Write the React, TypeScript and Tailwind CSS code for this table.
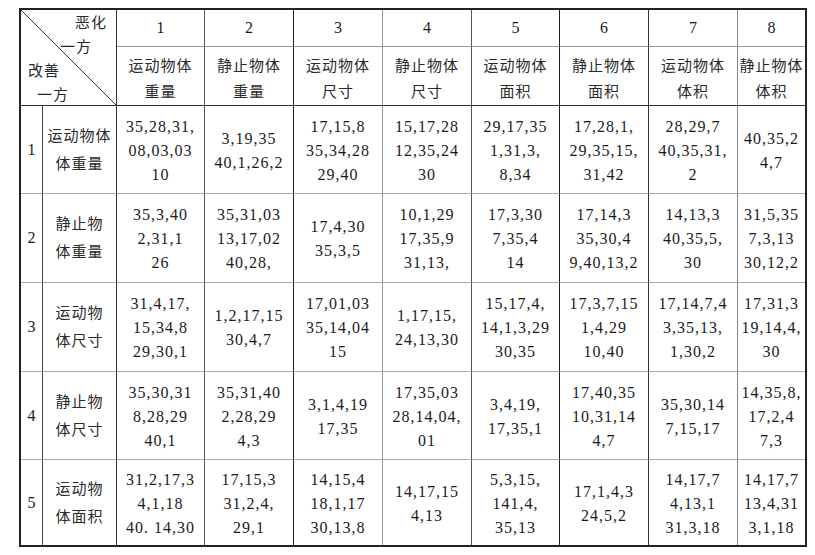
const cols = ["1", "2", "3", "4", "5", "6", "7", "8"];

const heads = [
  ["运动物体", "重量"],
  ["静止物体", "重量"],
  ["运动物体", "尺寸"],
  ["静止物体", "尺寸"],
  ["运动物体", "面积"],
  ["静止物体", "面积"],
  ["运动物体", "体积"],
  ["静止物体", "体积"],
];

const rows = [
  {
    no: "1",
    label: ["运动物体", "体重量"],
    cells: [
      ["35,28,31,", "08,03,03", "10"],
      ["3,19,35", "40,1,26,2"],
      ["17,15,8", "35,34,28", "29,40"],
      ["15,17,28", "12,35,24", "30"],
      ["29,17,35", "1,31,3,", "8,34"],
      ["17,28,1,", "29,35,15,", "31,42"],
      ["28,29,7", "40,35,31,", "2"],
      ["40,35,2", "4,7"],
    ],
  },
  {
    no: "2",
    label: ["静止物", "体重量"],
    cells: [
      ["35,3,40", "2,31,1", "26"],
      ["35,31,03", "13,17,02", "40,28,"],
      ["17,4,30", "35,3,5"],
      ["10,1,29", "17,35,9", "31,13,"],
      ["17,3,30", "7,35,4", "14"],
      ["17,14,3", "35,30,4", "9,40,13,2"],
      ["14,13,3", "40,35,5,", "30"],
      ["31,5,35", "7,3,13", "30,12,2"],
    ],
  },
  {
    no: "3",
    label: ["运动物", "体尺寸"],
    cells: [
      ["31,4,17,", "15,34,8", "29,30,1"],
      ["1,2,17,15", "30,4,7"],
      ["17,01,03", "35,14,04", "15"],
      ["1,17,15,", "24,13,30"],
      ["15,17,4,", "14,1,3,29", "30,35"],
      ["17,3,7,15", "1,4,29", "10,40"],
      ["17,14,7,4", "3,35,13,", "1,30,2"],
      ["17,31,3", "19,14,4,", "30"],
    ],
  },
  {
    no: "4",
    label: ["静止物", "体尺寸"],
    cells: [
      ["35,30,31", "8,28,29", "40,1"],
      ["35,31,40", "2,28,29", "4,3"],
      ["3,1,4,19", "17,35"],
      ["17,35,03", "28,14,04,", "01"],
      ["3,4,19,", "17,35,1"],
      ["17,40,35", "10,31,14", "4,7"],
      ["35,30,14", "7,15,17"],
      ["14,35,8,", "17,2,4", "7,3"],
    ],
  },
  {
    no: "5",
    label: ["运动物", "体面积"],
    cells: [
      ["31,2,17,3", "4,1,18", "40. 14,30"],
      ["17,15,3", "31,2,4,", "29,1"],
      ["14,15,4", "18,1,17", "30,13,8"],
      ["14,17,15", "4,13"],
      ["5,3,15,", "141,4,", "35,13"],
      ["17,1,4,3", "24,5,2"],
      ["14,17,7", "4,13,1", "31,3,18"],
      ["14,17,7", "13,4,31", "3,1,18"],
    ],
  },
];

// right-hand rule of each grid column; the scan has darker and lighter rules
const colBorder = [
  "border-r border-r-[#444]",
  "border-r border-r-[#333]",
  "border-r border-r-[#555]",
  "border-r border-r-[#222]",
  "border-r border-r-[#999]",
  "border-r border-r-[#555]",
  "border-r border-r-[#222]",
  "border-r border-r-[#333]",
  "border-r border-r-[#888]",
  "",
];

export default function App() {
  return (
    <div className="w-[815px] h-[555px] bg-white pl-[19px] pt-[8px] text-[#1a1a1a] font-[family-name:Liberation_Serif,Noto_Sans_CJK_SC,serif]">
      <div className="grid w-[788px] grid-cols-[22px_74px_88px_89px_89px_89px_88px_89px_89px_67px] grid-rows-[37px_59px_88px_89px_89px_88px_85px] border-2 border-[#222]">
        {/* corner cell with the diagonal */}
        <div
          className={`relative col-span-2 row-span-2 border-b border-b-[#333] ${colBorder[1]}`}
        >
          <svg
            className="absolute inset-0 h-full w-full"
            viewBox="0 0 100 100"
            preserveAspectRatio="none"
          >
            <line
              x1="0"
              y1="0"
              x2="100"
              y2="100"
              stroke="#333"
              strokeWidth="1"
              vectorEffect="non-scaling-stroke"
            />
          </svg>
          <div className="relative flex flex-col pt-[1px] text-[15px] leading-[24px] tracking-[1px] text-[#2a2a2a]">
            <div className="text-right pr-[9px]">恶化</div>
            <div className="text-right pr-[24px]">一方</div>
            <div className="pl-[7px]">改善</div>
            <div className="pl-[16px]">一方</div>
          </div>
        </div>

        {cols.map((c, i) => (
          <div
            key={c}
            className={`flex items-center justify-center border-b border-b-[#999] text-[16px] ${colBorder[i + 2]}`}
          >
            {c}
          </div>
        ))}

        {heads.map((h, i) => (
          <div
            key={i}
            className={`flex flex-col items-center justify-center pt-[5px] border-b border-b-[#333] text-[15px] leading-[26px] tracking-[1px] text-[#2a2a2a] ${colBorder[i + 2]}`}
          >
            <span>{h[0]}</span>
            <span>{h[1]}</span>
          </div>
        ))}

        {rows.map((r, ri) => {
          const last = ri === rows.length - 1;
          const rowLine = last ? "" : "border-b border-b-[#aaa]";
          return [
            <div
              key={`n${ri}`}
              className={`flex items-center justify-center text-[16px] ${rowLine} ${colBorder[0]}`}
            >
              {r.no}
            </div>,
            <div
              key={`l${ri}`}
              className={`flex flex-col items-center justify-center text-[15px] leading-[28px] tracking-[1px] text-[#2a2a2a] ${rowLine} ${colBorder[1]}`}
            >
              <span>{r.label[0]}</span>
              <span>{r.label[1]}</span>
            </div>,
            ...r.cells.map((lines, ci) => (
              <div
                key={`c${ri}-${ci}`}
                className={`flex flex-col items-center justify-center pt-[2px] text-[16px] leading-[24px] tracking-[1px] ${rowLine} ${colBorder[ci + 2]}`}
              >
                {lines.map((t, k) => (
                  <span key={k} className="whitespace-nowrap">
                    {t}
                  </span>
                ))}
              </div>
            )),
          ];
        })}
      </div>
    </div>
  );
}
